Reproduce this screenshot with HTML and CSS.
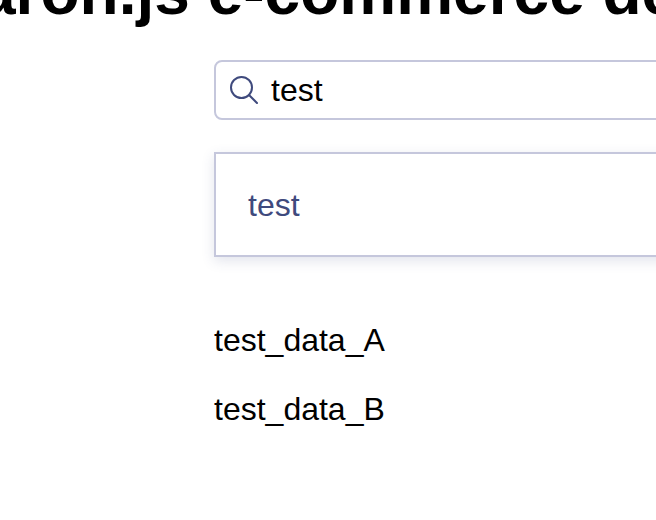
FILE: index.html
```html
<!DOCTYPE html>
<html lang="en">
<head>
  <meta charset="UTF-8">
  <title>Macaron.js e-commerce demo</title>
  <link rel="stylesheet" href="styles.css">
</head>
<body>
  <h1 class="title">aron.js e-commerce demo</h1>
  <div class="content">
    <div class="search-box">
      <svg class="search-icon" viewBox="0 0 28 28" width="28" height="28" fill="none" stroke="#3f4a7d" stroke-width="2" stroke-linecap="round">
        <circle cx="11.5" cy="11.5" r="10.5"/>
        <path d="M19 19 L27 27"/>
      </svg>
      <span class="search-text">test</span>
    </div>
    <div class="suggestions">
      <div class="suggestion">test</div>
    </div>
    <ul class="results">
      <li>test_data_A</li>
      <li>test_data_B</li>
    </ul>
  </div>
</body>
</html>
```

FILE: styles.css
```css
html, body {
  overflow: hidden;
}

body {
  margin: 0;
  height: 520px;
  background: white;
  font-family: "Liberation Sans", Arial, sans-serif;
  font-size: 32px;
  color: black;
}

.title {
  margin: -45px 0 0 -20px;
  font-size: 64px;
  line-height: 74px;
  font-weight: bold;
  white-space: nowrap;
}

.content {
  width: 800px;
  margin: 31px 0 0 214px;
}

.search-box {
  display: flex;
  align-items: center;
  gap: 13px;
  height: 60px;
  box-sizing: border-box;
  padding: 0 14px;
  border: 2px solid #c5c7dc;
  border-radius: 8px;
}

.search-icon {
  flex: none;
}

.suggestions {
  margin-top: 32px;
  border: 2px solid #c5c7dc;
  box-shadow: 0 4px 12px rgba(63, 74, 125, 0.15);
}

.suggestion {
  padding: 33px 32px 31px;
  line-height: 37px;
  color: #3f4a7d;
}

.results {
  list-style: none;
  margin: 65px 0 0;
  padding: 0;
}

.results li {
  line-height: 37px;
  margin-bottom: 32px;
}
```
